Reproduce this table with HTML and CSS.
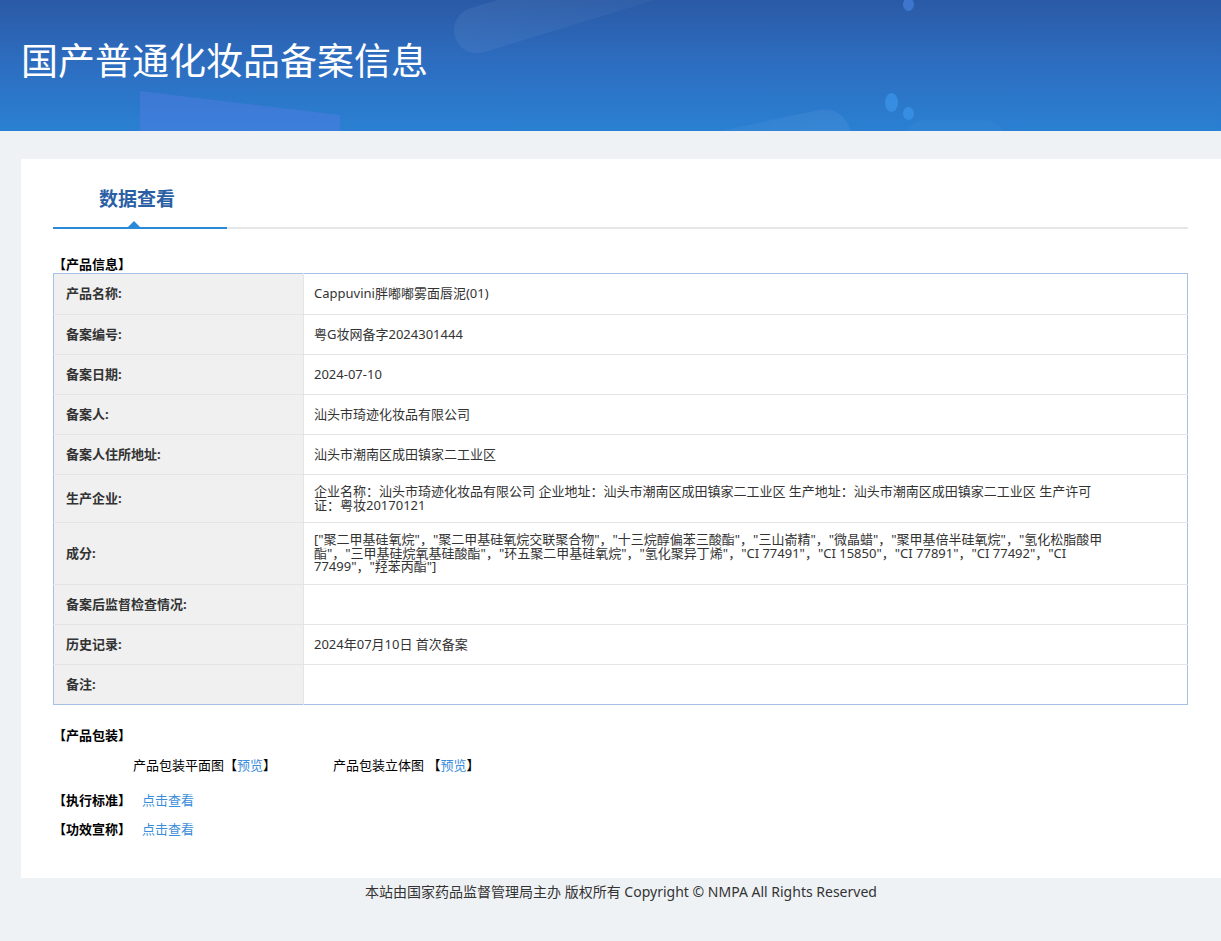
FILE: index.html
```html
<!DOCTYPE html>
<html lang="zh-CN">
<head>
<meta charset="utf-8">
<title>国产普通化妆品备案信息</title>
<link rel="stylesheet" href="styles.css">
</head>
<body>
<header class="banner">
  <div class="deco deco-panel"></div>
  <div class="deco deco-top"></div>
  <div class="deco deco-bottom"></div>
  <div class="deco deco-bottom2"></div>
  <div class="dot dot-a"></div>
  <div class="dot dot-b"></div>
  <div class="dot dot-c"></div>
  <h1 class="banner-title">国产普通化妆品备案信息</h1>
</header>

<main class="card">
  <div class="tabs">
    <div class="tab active">数据查看</div>
  </div>

  <div class="section-title first">【产品信息】</div>
  <table class="info">
    <tr><th>产品名称:</th><td><div class="val">Cappuvini胖嘟嘟雾面唇泥(01)</div></td></tr>
    <tr><th>备案编号:</th><td><div class="val">粤G妆网备字2024301444</div></td></tr>
    <tr><th>备案日期:</th><td><div class="val">2024-07-10</div></td></tr>
    <tr><th>备案人:</th><td><div class="val">汕头市琦迹化妆品有限公司</div></td></tr>
    <tr><th>备案人住所地址:</th><td><div class="val">汕头市潮南区成田镇家二工业区</div></td></tr>
    <tr><th>生产企业:</th><td><div class="val">企业名称：汕头市琦迹化妆品有限公司 企业地址：汕头市潮南区成田镇家二工业区 生产地址：汕头市潮南区成田镇家二工业区 生产许可证：粤妆20170121</div></td></tr>
    <tr><th>成分:</th><td><div class="val">["聚二甲基硅氧烷"，"聚二甲基硅氧烷交联聚合物"，"十三烷醇偏苯三酸酯"，"三山嵛精"，"微晶蜡"，"聚甲基倍半硅氧烷"，"氢化松脂酸甲酯"，"三甲基硅烷氧基硅酸酯"，"环五聚二甲基硅氧烷"，"氢化聚异丁烯"，"CI 77491"，"CI 15850"，"CI 77891"，"CI 77492"，"CI 77499"，"羟苯丙酯"]</div></td></tr>
    <tr><th>备案后监督检查情况:</th><td><div class="val"></div></td></tr>
    <tr><th>历史记录:</th><td><div class="val">2024年07月10日 首次备案</div></td></tr>
    <tr><th>备注:</th><td><div class="val"></div></td></tr>
  </table>

  <div class="section-title pack">【产品包装】</div>
  <div class="pack-row">
    <span class="pack-item">产品包装平面图【<a class="link" href="#">预览</a>】</span>
    <span class="pack-item">产品包装立体图 【<a class="link" href="#">预览</a>】</span>
  </div>

  <div class="line-item std"><span class="section-label">【执行标准】</span><a class="link" href="#">点击查看</a></div>
  <div class="line-item eff"><span class="section-label">【功效宣称】</span><a class="link" href="#">点击查看</a></div>
</main>

<footer class="footer">本站由国家药品监督管理局主办 版权所有 Copyright © NMPA All Rights Reserved</footer>
</body>
</html>
```

FILE: styles.css
```css
html, body {
  margin: 0;
  padding: 0;
}
body {
  background: #eff2f5;
  font-family: "Noto Sans", "Noto Sans CJK SC", sans-serif;
  font-size: 13px;
  color: #333;
}

/* ---------- banner ---------- */
.banner {
  position: relative;
  height: 131px;
  overflow: hidden;
  background: linear-gradient(180deg, #2a5aa6 0%, #2d6cbf 45%, #2a80d2 100%);
}
.banner-title {
  position: relative;
  margin: 0;
  padding: 36px 0 0 21px;
  font-family: "Noto Sans CJK SC", sans-serif;
  font-weight: 400;
  font-size: 37px;
  line-height: 46px;
  color: #fff;
}
.deco {
  position: absolute;
}
.deco-panel {
  left: 140px;
  top: 91px;
  width: 200px;
  height: 60px;
  background: rgba(95, 125, 235, 0.35);
  clip-path: polygon(0 0, 100% 40%, 100% 100%, 0 100%);
}
.deco-top {
  left: 455px;
  top: 14px;
  width: 320px;
  height: 46px;
  border-radius: 30px;
  background: linear-gradient(90deg, rgba(255,255,255,0.06), rgba(255,255,255,0.01));
  transform: rotate(-17deg);
  transform-origin: left center;
}
.deco-bottom {
  left: 600px;
  top: 104px;
  width: 250px;
  height: 52px;
  border-radius: 30px;
  background: linear-gradient(270deg, rgba(255,255,255,0.06), rgba(255,255,255,0.01));
  transform: rotate(-12deg);
  transform-origin: right center;
}
.deco-bottom2 {
  left: 905px;
  top: 120px;
  width: 100px;
  height: 40px;
  border-radius: 30px;
  background: rgba(255,255,255,0.025);
}
.dot {
  position: absolute;
  border-radius: 50%;
  background: rgba(60, 150, 235, 0.7);
}
.dot-a { left: 903px; top: -2px; width: 11px; height: 13px; background: rgba(70, 130, 220, 0.7); }
.dot-b { left: 885px; top: 93px; width: 13px; height: 19px; }
.dot-c { left: 903px; top: 107px; width: 11px; height: 13px; }

/* ---------- card ---------- */
.card {
  margin: 28px 0 0 21px;
  background: #fff;
  padding: 0 33px 40px 32px;
}

.tabs {
  display: flex;
  border-bottom: 2px solid #e5e6e8;
}
.tab {
  position: relative;
  width: 174px;
  box-sizing: border-box;
  padding: 28px 0 16px 46px;
  font-size: 19px;
  line-height: 24px;
  font-weight: 700;
  color: #2a5fa5;
}
.tab.active::after {
  content: "";
  position: absolute;
  left: 0; right: 0; bottom: -2px;
  height: 2px;
  background: #2a8ad8;
}
.tab.active::before {
  content: "";
  position: absolute;
  left: 75px;
  bottom: 0;
  border-left: 6px solid transparent;
  border-right: 6px solid transparent;
  border-bottom: 6px solid #2a8ad8;
}

.section-title {
  font-weight: 700;
  color: #000;
  line-height: 18px;
}
.section-title.first { margin-top: 26px; }
.section-title.pack { margin-top: 21px; }

/* ---------- table ---------- */
.info {
  width: 100%;
  border-collapse: collapse;
  border: 1px solid #a7c1e6;
}
.info tr { height: 40px; }
.info tr:first-child { height: 41px; }
.info th, .info td {
  border-top: 1px solid #e3e4e6;
  padding: 10px 0;
  line-height: 13.6px;
  vertical-align: middle;
  text-align: left;
}
.info tr:first-child th, .info tr:first-child td { border-top: none; }
.info th {
  width: 250px;
  box-sizing: border-box;
  background: #f0f0f0;
  padding-left: 12px;
  font-weight: 700;
  color: #333;
  border-right: 1px solid #e3e4e6;
}
.info td {
  padding-left: 10px;
  color: #333;
}
.val {
  max-width: 790px;
}

/* ---------- packaging / links ---------- */
.pack-row {
  margin-top: 12px;
  padding-left: 80px;
  display: flex;
  line-height: 18px;
  color: #000;
}
.pack-item { width: 200px; }

.link {
  color: #3a8ddb;
  text-decoration: none;
}

.line-item {
  line-height: 18px;
}
.line-item.std { margin-top: 17px; }
.line-item.eff { margin-top: 11px; }
.section-label {
  font-weight: 700;
  color: #000;
  margin-right: 11px;
}

/* ---------- footer ---------- */
.footer {
  text-align: center;
  padding: 5px 0 41px 21px;
  line-height: 18px;
  font-size: 14px;
  color: #333;
}
```
